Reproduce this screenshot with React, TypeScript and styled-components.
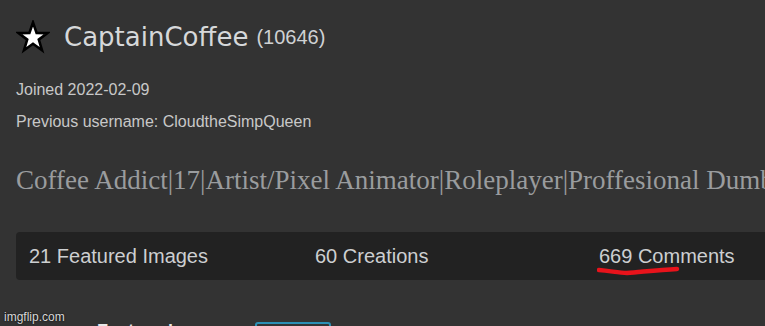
import React from 'react';
import styled, { createGlobalStyle } from 'styled-components';

const GlobalStyle = createGlobalStyle`
  html, body {
    margin: 0;
    padding: 0;
    background: #333333;
    overflow: hidden;
  }
  body {
    font-family: 'Liberation Sans', Arial, sans-serif;
  }
`;

const Page = styled.div`
  position: relative;
  height: 326px;
  padding: 20px 0 0 16px;
  box-sizing: border-box;
  overflow: hidden;
`;

const Header = styled.div`
  display: flex;
  align-items: center;
  height: 34px;
`;

const Star = styled.svg`
  width: 34px;
  height: 34px;
  margin-right: 14px;
`;

const Name = styled.span`
  font-family: 'DejaVu Sans', Verdana, sans-serif;
  font-size: 26px;
  line-height: 34px;
  color: #d6d8da;
`;

const Score = styled.span`
  font-size: 20px;
  color: #cfd1d3;
  margin-left: 8px;
`;

const Meta = styled.div<{ $gap: number }>`
  font-size: 16px;
  line-height: 20px;
  color: #c8c8c8;
  margin-top: ${(p) => p.$gap}px;
`;

const Bio = styled.div`
  font-family: 'Liberation Serif', 'Times New Roman', serif;
  font-size: 27px;
  line-height: 32px;
  color: #9a9c9e;
  white-space: nowrap;
  margin-top: 32px;
`;

const StatsBar = styled.div`
  display: grid;
  grid-template-columns: 286px 284px 1fr;
  align-items: center;
  height: 48px;
  margin-top: 36px;
  margin-right: -20px;
  padding-left: 13px;
  background: #222222;
  border-radius: 4px;
`;

const Stat = styled.div`
  position: relative;
  font-size: 20px;
  color: #cdcfd1;
  white-space: nowrap;
`;

const Scribble = styled.svg`
  position: absolute;
  left: -2px;
  top: 20px;
  width: 84px;
  height: 14px;
`;

const BottomRow = styled.div`
  display: grid;
  grid-template-columns: 81px 158px 76px;
  align-items: start;
  margin-top: 42px;
  height: 24px;
`;

const Label = styled.span`
  font-size: 15px;
  line-height: 18px;
  color: #aaaaaa;
`;

const Heading = styled.span`
  font-size: 18px;
  line-height: 18px;
  font-weight: bold;
  color: #e8e8e8;
`;

const OutlineButton = styled.div`
  height: 24px;
  box-sizing: border-box;
  border: 2px solid #2b8fb5;
  border-radius: 3px;
`;

const Watermark = styled.div`
  position: absolute;
  left: 4px;
  top: 310px;
  font-size: 12px;
  line-height: 14px;
  color: #d8d8d8;
  text-shadow: 0 0 2px #000;
`;

const App = () => (
  <>
    <GlobalStyle />
    <Page>
      <Header>
        <Star viewBox="0 0 34 34">
          <path
            d="M17 2.5 L20.6 13 L31.5 13.1 L22.8 19.6 L26 30.2 L17 23.8 L8 30.2 L11.2 19.6 L2.5 13.1 L13.4 13 Z"
            fill="#ffffff"
            stroke="#000000"
            strokeWidth="2.6"
            strokeLinejoin="miter"
          />
        </Star>
        <Name>CaptainCoffee</Name>
        <Score>(10646)</Score>
      </Header>
      <Meta $gap={26}>Joined 2022-02-09</Meta>
      <Meta $gap={12}>Previous username: CloudtheSimpQueen</Meta>
      <Bio>Coffee Addict|17|Artist/Pixel Animator|Roleplayer|Proffesional Dumbass</Bio>
      <StatsBar>
        <Stat>21 Featured Images</Stat>
        <Stat>60 Creations</Stat>
        <Stat>
          669 Comments
          <Scribble viewBox="0 0 84 14">
            <path
              d="M2 5 C14 6 22 8 30 8 C44 7 60 5 80 4"
              fill="none"
              stroke="#e8131b"
              strokeWidth="4.5"
              strokeLinecap="round"
            />
          </Scribble>
        </Stat>
      </StatsBar>
      <BottomRow>
        <Label>Images</Label>
        <Heading>Featured</Heading>
        <OutlineButton />
      </BottomRow>
      <Watermark>imgflip.com</Watermark>
    </Page>
  </>
);

export default App;
